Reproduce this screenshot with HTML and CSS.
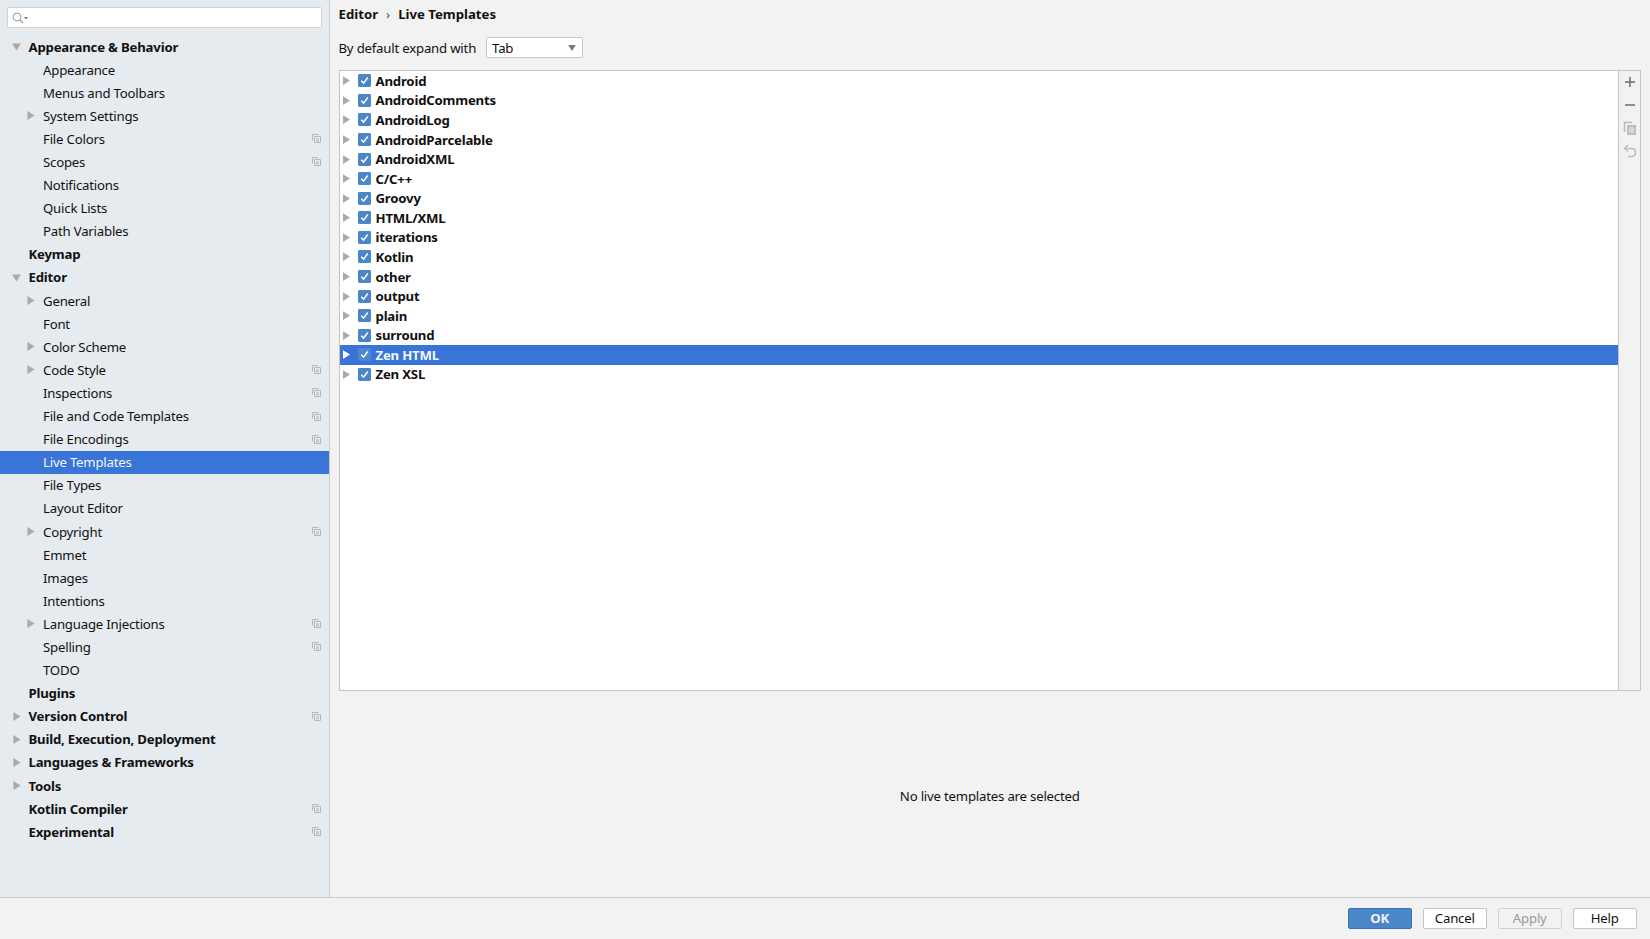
FILE: index.html
```html
<!DOCTYPE html>
<html lang="en">
<head>
<meta charset="utf-8">
<title>Settings - Live Templates</title>
<link rel="stylesheet" href="styles.css">
</head>
<body>
<svg class="defs" width="0" height="0" aria-hidden="true">
  <symbol id="right" viewBox="0 0 8 10"><path d="M0 0L8 5L0 10Z"/></symbol>
  <symbol id="down" viewBox="0 0 10 8"><path d="M0 0H10L5 8Z"/></symbol>
  <symbol id="proj" viewBox="0 0 9 9"><path d="M.5 6.5V.5H6.5M2.5 2.5H8.5V8.5H2.5Z" fill="none" stroke="currentColor"/><path d="M4 5H7M4 6.8H7" stroke="currentColor"/></symbol>
  <symbol id="check" viewBox="0 0 14 14"><rect width="14" height="14" rx="1.5" fill="currentColor"/><path d="M3.5 7.2L6 9.8L10.5 3.8" fill="none" stroke="#fff" stroke-width="1.6"/></symbol>
</svg>
<div class="main">
  <nav class="sidebar">
    <div class="search">
      <svg class="search-icon" viewBox="0 0 16 12"><circle cx="5" cy="5" r="4" fill="none" stroke="#9a9a9a"/><path d="M8 8L11 11" stroke="#9a9a9a" stroke-width="1.2"/><path d="M12 5H16L14 7.5Z" fill="#777"/></svg>
    </div>
    <ul class="nav">
      <li class="row top"><svg class="arrow-down"><use href="#down"/></svg>Appearance &amp; Behavior</li>
      <li class="row sub">Appearance</li>
      <li class="row sub">Menus and Toolbars</li>
      <li class="row sub"><svg class="arrow"><use href="#right"/></svg>System Settings</li>
      <li class="row sub">File Colors<svg class="proj"><use href="#proj"/></svg></li>
      <li class="row sub">Scopes<svg class="proj"><use href="#proj"/></svg></li>
      <li class="row sub">Notifications</li>
      <li class="row sub">Quick Lists</li>
      <li class="row sub">Path Variables</li>
      <li class="row top">Keymap</li>
      <li class="row top"><svg class="arrow-down"><use href="#down"/></svg>Editor</li>
      <li class="row sub"><svg class="arrow"><use href="#right"/></svg>General</li>
      <li class="row sub">Font</li>
      <li class="row sub"><svg class="arrow"><use href="#right"/></svg>Color Scheme</li>
      <li class="row sub"><svg class="arrow"><use href="#right"/></svg>Code Style<svg class="proj"><use href="#proj"/></svg></li>
      <li class="row sub">Inspections<svg class="proj"><use href="#proj"/></svg></li>
      <li class="row sub">File and Code Templates<svg class="proj"><use href="#proj"/></svg></li>
      <li class="row sub">File Encodings<svg class="proj"><use href="#proj"/></svg></li>
      <li class="row sub active">Live Templates</li>
      <li class="row sub">File Types</li>
      <li class="row sub">Layout Editor</li>
      <li class="row sub"><svg class="arrow"><use href="#right"/></svg>Copyright<svg class="proj"><use href="#proj"/></svg></li>
      <li class="row sub">Emmet</li>
      <li class="row sub">Images</li>
      <li class="row sub">Intentions</li>
      <li class="row sub"><svg class="arrow"><use href="#right"/></svg>Language Injections<svg class="proj"><use href="#proj"/></svg></li>
      <li class="row sub">Spelling<svg class="proj"><use href="#proj"/></svg></li>
      <li class="row sub">TODO</li>
      <li class="row top">Plugins</li>
      <li class="row top"><svg class="arrow-top"><use href="#right"/></svg>Version Control<svg class="proj"><use href="#proj"/></svg></li>
      <li class="row top"><svg class="arrow-top"><use href="#right"/></svg>Build, Execution, Deployment</li>
      <li class="row top"><svg class="arrow-top"><use href="#right"/></svg>Languages &amp; Frameworks</li>
      <li class="row top"><svg class="arrow-top"><use href="#right"/></svg>Tools</li>
      <li class="row top">Kotlin Compiler<svg class="proj"><use href="#proj"/></svg></li>
      <li class="row top">Experimental<svg class="proj"><use href="#proj"/></svg></li>
    </ul>
  </nav>
  <section class="content">
    <div class="crumbs"><span>Editor</span><span class="sep">›</span><span>Live Templates</span></div>
    <div class="expand">
      <span>By default expand with</span>
      <div class="select"><span>Tab</span><svg class="select-arrow"><use href="#down"/></svg></div>
    </div>
    <div class="panel">
      <ul class="tree">
        <li class="item"><svg class="t-arrow"><use href="#right"/></svg><svg class="check"><use href="#check"/></svg>Android</li>
        <li class="item"><svg class="t-arrow"><use href="#right"/></svg><svg class="check"><use href="#check"/></svg>AndroidComments</li>
        <li class="item"><svg class="t-arrow"><use href="#right"/></svg><svg class="check"><use href="#check"/></svg>AndroidLog</li>
        <li class="item"><svg class="t-arrow"><use href="#right"/></svg><svg class="check"><use href="#check"/></svg>AndroidParcelable</li>
        <li class="item"><svg class="t-arrow"><use href="#right"/></svg><svg class="check"><use href="#check"/></svg>AndroidXML</li>
        <li class="item"><svg class="t-arrow"><use href="#right"/></svg><svg class="check"><use href="#check"/></svg>C/C++</li>
        <li class="item"><svg class="t-arrow"><use href="#right"/></svg><svg class="check"><use href="#check"/></svg>Groovy</li>
        <li class="item"><svg class="t-arrow"><use href="#right"/></svg><svg class="check"><use href="#check"/></svg>HTML/XML</li>
        <li class="item"><svg class="t-arrow"><use href="#right"/></svg><svg class="check"><use href="#check"/></svg>iterations</li>
        <li class="item"><svg class="t-arrow"><use href="#right"/></svg><svg class="check"><use href="#check"/></svg>Kotlin</li>
        <li class="item"><svg class="t-arrow"><use href="#right"/></svg><svg class="check"><use href="#check"/></svg>other</li>
        <li class="item"><svg class="t-arrow"><use href="#right"/></svg><svg class="check"><use href="#check"/></svg>output</li>
        <li class="item"><svg class="t-arrow"><use href="#right"/></svg><svg class="check"><use href="#check"/></svg>plain</li>
        <li class="item"><svg class="t-arrow"><use href="#right"/></svg><svg class="check"><use href="#check"/></svg>surround</li>
        <li class="item selected"><svg class="t-arrow"><use href="#right"/></svg><svg class="check"><use href="#check"/></svg>Zen HTML</li>
        <li class="item"><svg class="t-arrow"><use href="#right"/></svg><svg class="check"><use href="#check"/></svg>Zen XSL</li>
      </ul>
      <div class="toolbar">
        <svg class="tool" viewBox="0 0 16 16"><path d="M3 8H13M8 3V13" stroke="#6e6e6e" stroke-width="1.5" fill="none"/></svg>
        <svg class="tool" viewBox="0 0 16 16"><path d="M3 8H13" stroke="#6e6e6e" stroke-width="1.5" fill="none"/></svg>
        <svg class="tool" viewBox="0 0 16 16"><path d="M2.5 12V2.5H10" stroke="#bdbdbd" stroke-width="1.5" fill="none"/><path d="M5 5H14V15H5Z" fill="#bdbdbd"/><path d="M7 8H12M7 10H12M7 12H12" stroke="#f2f2f2"/></svg>
        <svg class="tool" viewBox="0 0 16 16"><path d="M6 2L2.5 5.5L6 8.5M3 5.5H10C12.5 5.5 13.5 7.5 13.5 9.5C13.5 12 12 13.5 9.5 13.5H6" stroke="#bdbdbd" stroke-width="1.5" fill="none"/></svg>
      </div>
    </div>
    <div class="empty">No live templates are selected</div>
  </section>
</div>
<footer class="footer">
  <button class="btn primary">OK</button>
  <button class="btn">Cancel</button>
  <button class="btn disabled">Apply</button>
  <button class="btn">Help</button>
</footer>
</body>
</html>
```

FILE: styles.css
```css
* { box-sizing: border-box; }
html { height: 939px; overflow: hidden; }
body {
  margin: 0;
  height: 939px;
  display: flex;
  flex-direction: column;
  background: #f2f2f2;
  color: #111;
  font-family: "Noto Sans", "Open Sans", sans-serif;
  font-size: 13.2px;
  letter-spacing: -0.2px;
  overflow: hidden;
}
.defs { position: absolute; }
ul { list-style: none; margin: 0; padding: 0; }

.main { display: flex; height: 896.5px; }

.sidebar {
  width: 329.5px;
  flex: none;
  background: #e6ebf0;
  border-right: 1.5px solid #c8c9ca;
  padding-top: 7px;
}
.search {
  display: flex;
  align-items: center;
  height: 21px;
  margin: 0 7px;
  padding-left: 4px;
  background: #fff;
  border: 1px solid #cfd2d4;
  border-radius: 2px;
}
.search-icon { width: 16px; height: 12px; }
.nav { margin-top: 7px; }
.row {
  display: flex;
  align-items: center;
  position: relative;
  height: 23.1px;
  white-space: nowrap;
}
.top { padding-left: 28.5px; font-weight: 700; }
.sub { padding-left: 43px; }
.active { background: #3875d7; color: #f2f6fc; }
.arrow, .arrow-top, .arrow-down, .proj { position: absolute; }
.arrow { left: 27px; top: 7px; width: 8px; height: 9px; fill: #aaa; }
.arrow-top { left: 13px; top: 7px; width: 8px; height: 9px; fill: #aaa; }
.arrow-down { left: 12px; top: 8px; width: 9px; height: 8px; fill: #aaa; }
.proj { left: 312px; top: 7px; width: 9px; height: 9px; color: #b4b7ba; }

.content { flex: 1; min-width: 0; padding: 0 9px; display: flex; flex-direction: column; }
.crumbs { display: flex; gap: 8px; height: 28px; align-items: center; font-weight: 700; letter-spacing: 0; }
.sep { font-weight: 400; color: #555; }
.expand { display: flex; align-items: center; gap: 10px; height: 21px; margin-top: 9px; }
.select {
  display: flex;
  align-items: center;
  justify-content: space-between;
  width: 97px;
  height: 21px;
  padding: 0 5px;
  background: #fff;
  border: 1px solid #c9c9c9;
  border-radius: 2px;
}
.select-arrow { width: 10px; height: 6px; fill: #777; }

.panel {
  display: flex;
  height: 621px;
  margin-top: 11.5px;
  background: #fff;
  border: 1px solid #c4c4c4;
}
.tree { flex: 1; padding-top: 0.5px; }
.item {
  display: flex;
  align-items: center;
  height: 19.58px;
  font-weight: 700;
  white-space: nowrap;
}
.t-arrow { width: 7px; height: 9px; margin-left: 3px; fill: #aaa; }
.check { width: 13px; height: 13px; margin: 0 5px 0 8px; color: #4a86c8; }
.selected { background: #3875d7; color: #f2f6fc; }
.selected .t-arrow { fill: #fff; }
.selected .check { color: #4f86cf; }

.toolbar {
  width: 22px;
  flex: none;
  display: flex;
  flex-direction: column;
  align-items: center;
  gap: 7px;
  padding-top: 3.5px;
  background: #f2f2f2;
  border-left: 1px solid #c4c4c4;
}
.tool { width: 16px; height: 16px; }

.empty { flex: 1; display: flex; align-items: center; justify-content: center; padding-top: 5px; }

.footer {
  flex: 1;
  display: flex;
  justify-content: flex-end;
  gap: 10.5px;
  padding: 10px 13px 0 0;
  border-top: 1px solid #cdcdcd;
}
.btn {
  width: 64.5px;
  height: 21.5px;
  padding: 0;
  font: inherit;
  letter-spacing: inherit;
  color: #111;
  background: #fff;
  border: 1px solid #c4c4c4;
  border-radius: 2px;
}
.primary { background: #4a86c8; border-color: #3a74b8; color: #eef3f9; font-weight: 700; }
.disabled { background: #f2f2f2; border-color: #d2d2d2; color: #999; }
```
